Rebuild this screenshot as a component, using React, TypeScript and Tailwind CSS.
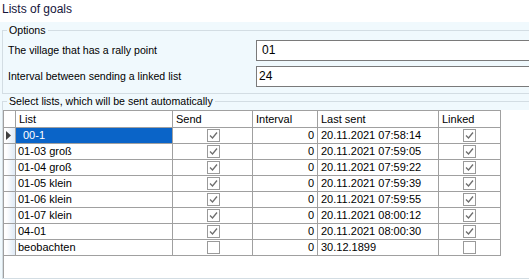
import React from "react";

type Row = {name: string; send: boolean; interval: number; last: string; linked: boolean};

const rows: Row[] = [
    {name: "00-1", send: true, interval: 0, last: "20.11.2021 07:58:14", linked: true},
    {name: "01-03 groß", send: true, interval: 0, last: "20.11.2021 07:59:05", linked: true},
    {name: "01-04 groß", send: true, interval: 0, last: "20.11.2021 07:59:22", linked: true},
    {name: "01-05 klein", send: true, interval: 0, last: "20.11.2021 07:59:39", linked: true},
    {name: "01-06 klein", send: true, interval: 0, last: "20.11.2021 07:59:55", linked: true},
    {name: "01-07 klein", send: true, interval: 0, last: "20.11.2021 08:00:12", linked: true},
    {name: "04-01", send: true, interval: 0, last: "20.11.2021 08:00:30", linked: true},
    {name: "beobachten", send: false, interval: 0, last: "30.12.1899", linked: false},
];

const Check = ({checked}: {checked: boolean}) => (
    <svg width="13" height="13" viewBox="0 0 13 13" className="block">
        <rect x="0.5" y="0.5" width="12" height="12" fill="#fff" stroke="#9a9a9a"/>
        {checked && <path d="M3 6.5 L5.5 9 L10 3.5" fill="none" stroke="#6e6e6e" strokeWidth="1.3"/>}
    </svg>
);

const Pointer = () => (
    <svg width="5" height="9" viewBox="0 0 5 9" className="block">
        <path d="M0 0 L5 4.5 L0 9 Z" fill="#404040"/>
    </svg>
);

const cell = "border-r border-b border-[#a0a0a0] h-[16px] leading-[15px] whitespace-nowrap overflow-hidden";
const head = "border-r border-t border-b border-[#a0a0a0] h-[18px] leading-[16px] pl-[3px] bg-white";

export default function App() {
    return (
        <div className="w-[529px] h-[279px] overflow-hidden bg-white text-black text-[11px] font-['Liberation_Sans',Arial,sans-serif]">
            <div className="h-[22px] pl-[2px] pt-[2px] text-[12px] leading-[15px] text-[#14143a]">Lists of goals</div>
            <div className="w-[580px] h-[257px] bg-[#f0f9fd] pl-[2px] pt-[1px] flex flex-col">
                <fieldset className="border border-[#d3dde3] pb-[6px]">
                    <legend className="ml-[4px] px-[2px] leading-[14px] text-[10.6px]">Options</legend>
                    <div className="flex items-center mt-[3px]">
                        <span className="w-[253px] pl-[5px] text-[10.6px]">The village that has a rally point</span>
                        <div className="flex-1 h-[21px] bg-white border border-[#7a7a7a] pl-[5px] leading-[19px] text-[12px]">01</div>
                    </div>
                    <div className="flex items-center mt-[5px]">
                        <span className="w-[253px] pl-[5px] text-[10.6px]">Interval between sending a linked list</span>
                        <div className="flex-1 h-[21px] bg-white border border-[#7a7a7a] pl-[2px] leading-[19px] text-[12px]">24</div>
                    </div>
                </fieldset>
                <fieldset className="flex-1 border border-[#d3dde3] flex flex-col min-h-0">
                    <legend className="ml-[4px] px-[2px] leading-[14px] text-[10.6px]">Select lists, which will be sent automatically</legend>
                    <div className="mt-[2px] flex-1 bg-white border-l border-[#a0a0a0]">
                        <div className="grid grid-cols-[12px_157px_80px_65px_121px_62px]">
                            <div className={head}></div>
                            <div className={head}>List</div>
                            <div className={head}>Send</div>
                            <div className={head}>Interval</div>
                            <div className={head}>Last sent</div>
                            <div className={head}>Linked</div>
                            {rows.map((r, i) => (
                                <React.Fragment key={r.name}>
                                    <div className={`${cell} bg-linear-to-r from-white from-20% to-[#dfeaf6] flex items-center pl-[2px]`}>
                                        {i === 0 && <Pointer/>}
                                    </div>
                                    <div className={`${cell} ${i === 0 ? "bg-[#0a64c8] text-white pl-[7px]" : "pl-[2px]"}`}>{r.name}</div>
                                    <div className={`${cell} flex items-center justify-center pl-[2px]`}><Check checked={r.send}/></div>
                                    <div className={`${cell} text-right pr-[3px]`}>{r.interval}</div>
                                    <div className={`${cell} pl-[3px]`}>{r.last}</div>
                                    <div className={`${cell} flex items-center justify-center`}><Check checked={r.linked}/></div>
                                </React.Fragment>
                            ))}
                        </div>
                    </div>
                </fieldset>
            </div>
        </div>
    );
}
